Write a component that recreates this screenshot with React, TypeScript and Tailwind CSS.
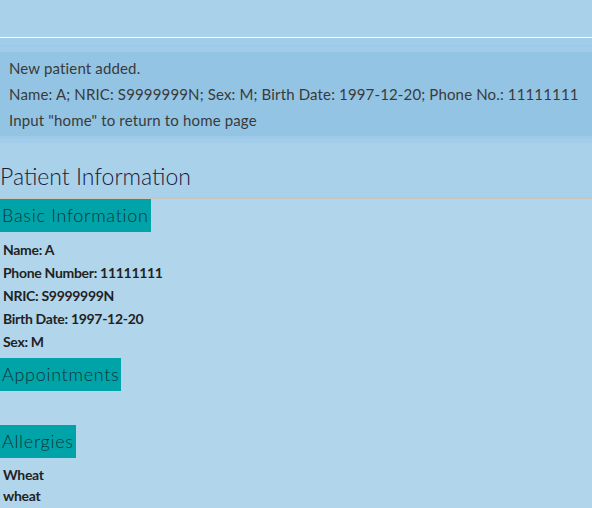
export default function App() {
	const basic = [
		['Name', 'A'],
		['Phone Number', '11111111'],
		['NRIC', 'S9999999N'],
		['Birth Date', '1997-12-20'],
		['Sex', 'M'],
	];
	const font = { fontFamily: 'Lato, "Open Sans", sans-serif' };
	return (
		<div className="w-[592px] h-[508px] overflow-hidden bg-[#b1d6ec]" style={font}>
			{/* Top area: command bar + result box */}
			<div className="bg-[#a9d1ea]">
				<div className="h-[37px]" />
				<div className="h-[1px] bg-white" />
				<div className="h-[7px] bg-[#a2cdea]" />
				<div className="h-[2px] bg-[#9ccae8]" />
				<div className="h-[5px] bg-[#a0cce9]" />
				<div className="bg-[#93c4e4] pl-[9px] pt-[3px] pb-[3px] text-[15px] leading-[26px] text-[#3a3a3a] tracking-[0.15px]">
					<div>New patient added.</div>
					<div>Name: A; NRIC: S9999999N; Sex: M; Birth Date: 1997-12-20; Phone No.: 11111111</div>
					<div>Input "home" to return to home page</div>
				</div>
				<div className="h-[2px] bg-[#9ccae8]" />
				<div className="h-[5px] bg-[#a2cdea]" />
				<div className="h-[54px] flex items-end pb-[6px]">
					<span className="text-[23px] font-light leading-[30px] text-[#1a1a3a]">Patient Information</span>
				</div>
			</div>
			<div className="h-[2px] bg-[#c8c6c2]" />

			{/* Patient details */}
			<div>
				<div className="inline-block bg-[#00a4a8] px-[2px] h-[33px] leading-[33px] text-[18px] font-light text-[#0f3338] tracking-[0.7px]">
					Basic Information
				</div>
				<div className="pl-[3px] pt-[6px] pb-[5px] flex flex-col text-[14px] font-bold leading-[23px] text-[#222] tracking-[-0.3px]">
					{basic.map(([k, v]) => (
						<div key={k}>
							{k}: {v}
						</div>
					))}
				</div>
				<div className="inline-block bg-[#00a4a8] px-[2px] h-[33px] leading-[33px] text-[18px] font-light text-[#0f3338] tracking-[0.7px]">
					Appointments
				</div>
				<div className="h-[34px]" />
				<div className="inline-block bg-[#00a4a8] px-[2px] h-[33px] leading-[33px] text-[18px] font-light text-[#0f3338] tracking-[0.7px]">
					Allergies
				</div>
				<div className="pl-[3px] pt-[6px] flex flex-col text-[14px] font-bold leading-[21px] text-[#222] tracking-[-0.3px]">
					<div>Wheat</div>
					<div>wheat</div>
				</div>
			</div>
		</div>
	);
}
